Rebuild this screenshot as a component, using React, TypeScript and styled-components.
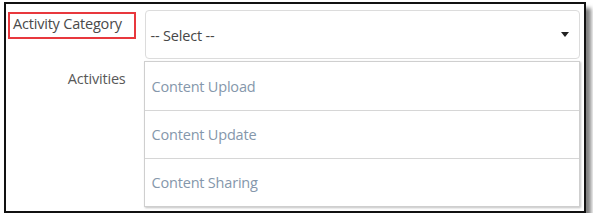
import styled, { createGlobalStyle } from "styled-components";

const GlobalStyle = createGlobalStyle`
  body {
    margin: 0;
    background: #fff;
    font-family: "Open Sans", "Liberation Sans", sans-serif;
  }
`;

const options = ["Content Upload", "Content Update", "Content Sharing"];

function App() {
  return (
    <>
      <GlobalStyle />
      <Frame>
        <CategoryRow>
          <HighlightLabel>Activity Category</HighlightLabel>
          <SelectBox>
            <SelectText>-- Select --</SelectText>
            <Caret />
          </SelectBox>
        </CategoryRow>
        <ActivitiesRow>
          <PlainLabel>Activities</PlainLabel>
          <OptionList>
            {options.map((opt) => (
              <OptionItem key={opt}>{opt}</OptionItem>
            ))}
          </OptionList>
        </ActivitiesRow>
      </Frame>
    </>
  );
}

export default App;

const Frame = styled.div`
  box-sizing: border-box;
  margin: 2px 0 0 4px;
  width: 582px;
  height: 211px;
  border: 2px solid #111;
  background: #fff;
  box-shadow: 5px 6px 4px rgba(0, 0, 0, 0.5);
  padding: 6px 4px 0 2px;
  display: flex;
  flex-direction: column;
  gap: 2px;
`;

const CategoryRow = styled.div`
  display: flex;
  align-items: flex-start;
`;

const ActivitiesRow = styled.div`
  display: flex;
  align-items: flex-start;
`;

const HighlightLabel = styled.div`
  box-sizing: border-box;
  width: 128px;
  height: 27px;
  margin-top: 2px;
  border: 2.5px solid #e8383d;
  padding: 0 0 0 3px;
  font-size: 14.5px;
  letter-spacing: -0.2px;
  color: #4a4a4a;
  white-space: nowrap;
`;

const PlainLabel = styled.div`
  width: 118px;
  padding-top: 8px;
  text-align: right;
  font-size: 14.5px;
  letter-spacing: -0.2px;
  color: #595959;
`;

const SelectBox = styled.div`
  box-sizing: border-box;
  margin-left: 9px;
  width: 437px;
  height: 49px;
  border: 1px solid #dcdcdc;
  border-radius: 4px;
  display: flex;
  align-items: center;
  justify-content: space-between;
  padding: 2px 10px 0 5px;
`;

const SelectText = styled.span`
  font-size: 14.5px;
  letter-spacing: -0.2px;
  color: #474747;
`;

const Caret = styled.span`
  width: 0;
  height: 0;
  border-left: 4px solid transparent;
  border-right: 4px solid transparent;
  border-top: 5px solid #222;
  margin-top: -2px;
`;

const OptionList = styled.div`
  box-sizing: border-box;
  margin-left: 18px;
  width: 438px;
  border: 1px solid #cfcfcf;
  box-shadow: 1px 1px 2px rgba(0, 0, 0, 0.25);
  background: #fff;
  display: flex;
  flex-direction: column;
`;

const OptionItem = styled.div`
  box-sizing: border-box;
  height: 48px;
  padding: 0 7px;
  display: flex;
  align-items: center;
  font-size: 14.5px;
  letter-spacing: -0.2px;
  color: #8597ab;
  & + & {
    border-top: 1.5px solid #d6d6d6;
  }
`;
